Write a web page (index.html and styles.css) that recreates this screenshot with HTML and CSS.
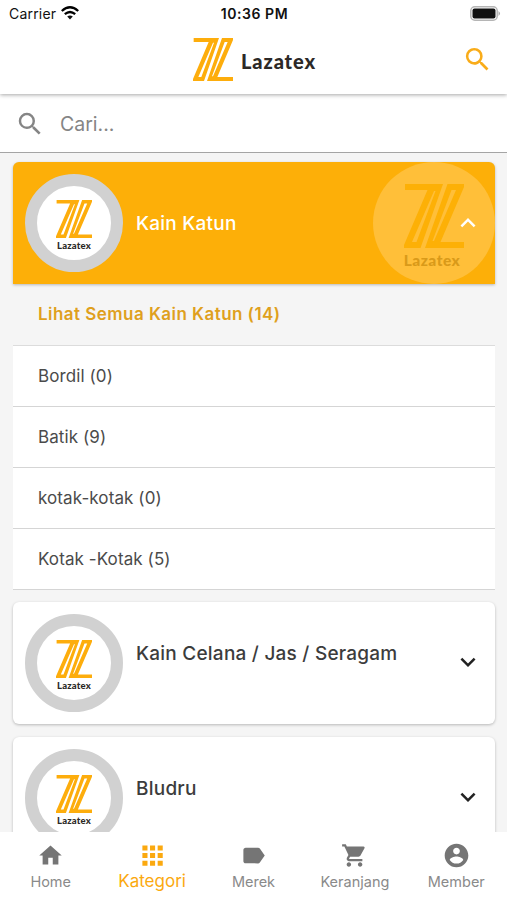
FILE: index.html
```html
<!DOCTYPE html>
<html lang="id">
<head>
<meta charset="utf-8">
<meta name="viewport" content="width=device-width">
<title>Lazatex</title>
<link rel="stylesheet" href="styles.css">
</head>
<body>
<svg class="defs" width="0" height="0">
  <symbol id="mark" viewBox="0 0 120 128" preserveAspectRatio="none">
    <g fill="currentColor" fill-rule="evenodd">
      <path d="M2 0H78L33 128H0V122L47 12H2zM16 116H25L63 14H60z"/>
      <path d="M120 128H42L87 0H120V6L73 116H120zM104 12H95L57 114H60z"/>
    </g>
  </symbol>
  <symbol id="search" viewBox="0 0 24 24"><path d="M15.5 14h-.79l-.28-.27A6.471 6.471 0 0 0 16 9.5 6.5 6.5 0 1 0 9.5 16c1.61 0 3.09-.59 4.23-1.57l.27.28v.79l5 4.99L20.49 19l-4.99-5zm-6 0C7.01 14 5 11.99 5 9.5S7.01 5 9.5 5 14 7.01 14 9.5 11.99 14 9.5 14z"/></symbol>
  <symbol id="down" viewBox="0 0 24 24"><path d="M7.41 8.59 12 13.17l4.59-4.58L18 10l-6 6-6-6z"/></symbol>
</svg>
<div class="app">
  <div class="status">
    <div class="carrier">Carrier
      <svg width="18" height="14" viewBox="0 0 18 14"><g fill="none" stroke="#000" stroke-width="2.3"><path d="M.8 5Q9-2.4 17.2 5"/><path d="M3.8 8.2Q9 3.8 14.2 8.2"/></g><path d="M6.2 10.6Q9 8.6 11.8 10.6L9 13.6z"/></svg>
    </div>
    <div class="time">10:36 PM</div>
    <svg class="battery" width="31" height="15" viewBox="0 0 31 15"><rect x=".8" y=".8" width="26.4" height="13.4" rx="4" fill="#fff" stroke="#b5b5b5" stroke-width="1.5"/><rect x="2.5" y="2.5" width="23" height="10" rx="2"/><path d="M28.5 5q3 2.5 0 5z" fill="#aaa"/></svg>
  </div>
  <header class="header">
    <div class="brand"><svg class="brand-mark"><use href="#mark"/></svg><span class="word">Lazatex</span></div>
    <svg class="header-search"><use href="#search"/></svg>
  </header>
  <div class="searchbar"><svg><use href="#search"/></svg><span>Cari...</span></div>
  <main class="list">
    <section class="card active">
      <div class="watermark"><svg><use href="#mark"/></svg><span class="word">Lazatex</span></div>
      <div class="avatar"><svg><use href="#mark"/></svg><span class="word">Lazatex</span></div>
      <h2>Kain Katun</h2>
      <svg class="chevron"><use href="#down"/></svg>
    </section>
    <div class="all">Lihat Semua Kain Katun (14)</div>
    <ul class="sub">
      <li>Bordil (0)</li>
      <li>Batik (9)</li>
      <li>kotak-kotak (0)</li>
      <li>Kotak -Kotak (5)</li>
    </ul>
    <section class="card">
      <div class="avatar"><svg><use href="#mark"/></svg><span class="word">Lazatex</span></div>
      <h2>Kain Celana / Jas / Seragam</h2>
      <svg class="chevron"><use href="#down"/></svg>
    </section>
    <section class="card">
      <div class="avatar"><svg><use href="#mark"/></svg><span class="word">Lazatex</span></div>
      <h2>Bludru</h2>
      <svg class="chevron"><use href="#down"/></svg>
    </section>
  </main>
  <nav class="tabs">
    <a><svg viewBox="0 0 24 24"><path d="M10 20v-6h4v6h5v-8h3L12 3 2 12h3v8z"/></svg><span>Home</span></a>
    <a class="on"><svg viewBox="0 0 24 24"><path d="M4 8h4V4H4zm6 12h4v-4h-4zm-6 0h4v-4H4zm0-6h4v-4H4zm6 0h4v-4h-4zm6-10v4h4V4zm-6 4h4V4h-4zm6 6h4v-4h-4zm0 6h4v-4h-4z" transform="matrix(1.13 0 0 1.13 -1.5 -1.5)"/></svg><span>Kategori</span></a>
    <a><svg viewBox="0 0 24 24"><path d="M17.63 5.84C17.27 5.33 16.67 5 16 5L5 5.01C3.9 5.01 3 5.9 3 7v10c0 1.1.9 1.99 2 1.99L16 19c.67 0 1.27-.33 1.63-.84L22 12z"/></svg><span>Merek</span></a>
    <a><svg viewBox="0 0 24 24"><path d="M7 18c-1.1 0-1.99.9-1.99 2S5.9 22 7 22s2-.9 2-2-.9-2-2-2zM1 2v2h2l3.6 7.59-1.35 2.45C4.52 15.37 5.48 17 7 17h12v-2H7.42a.25.25 0 0 1-.25-.25l.03-.12.9-1.63h7.45c.75 0 1.41-.41 1.75-1.03l3.58-6.49A1 1 0 0 0 20 4H5.21l-.94-2zm16 16c-1.1 0-1.99.9-1.99 2s.89 2 1.99 2 2-.9 2-2-.9-2-2-2z"/></svg><span>Keranjang</span></a>
    <a><svg viewBox="0 0 24 24"><path d="M12 1.5C6.2 1.5 1.5 6.2 1.5 12S6.2 22.5 12 22.5 22.5 17.8 22.5 12 17.8 1.5 12 1.5zm0 3.5c1.66 0 3 1.34 3 3s-1.34 3-3 3-3-1.34-3-3 1.34-3 3-3zm0 14.2a7.2 7.2 0 0 1-6-3.22c.03-1.99 4-3.08 6-3.08 1.99 0 5.97 1.09 6 3.08a7.2 7.2 0 0 1-6 3.22z"/></svg><span>Member</span></a>
  </nav>
</div>
</body>
</html>
```
FILE: styles.css
```css
* { box-sizing: border-box; }
body { margin: 0; font-family: Inter, "Liberation Sans", sans-serif; color: #3c3c3c; background: #f5f5f5; }
svg { display: block; flex: none; fill: currentColor; }
.defs { position: absolute; }
.app { height: 900px; display: flex; flex-direction: column; overflow: hidden; }
.status { flex: none; height: 28px; background: #fff; color: #111; display: grid; grid-template-columns: 1fr auto 1fr; align-items: center; padding: 0 6px 2px 9px; font-size: 14px; letter-spacing: .2px; position: relative; z-index: 2; }
.carrier { display: flex; align-items: center; gap: 5px; }
.time { font-weight: 600; font-size: 14px; letter-spacing: .55px; margin-right: 1px; }
.battery { justify-self: end; }
.header { flex: none; height: 66px; background: #fff; display: flex; align-items: center; justify-content: center; position: relative; z-index: 1; box-shadow: 0 1px 4px rgba(0,0,0,.35); padding: 0 0 3px 2px; }
.brand { display: flex; align-items: center; gap: 8px; color: #fdad0c; }
.brand-mark { width: 40px; height: 43px; }
.word { font-family: Lato, sans-serif; font-weight: 900; color: #2c2927; line-height: 1; }
.brand .word { font-size: 20px; padding-top: 3px; letter-spacing: .9px; }
.header-search { position: absolute; right: 14px; top: 16px; width: 31px; height: 31px; color: #f9ac19; }
.searchbar { flex: none; height: 59px; border-bottom: 1px solid #a5a5a5; background: #fff; display: flex; align-items: center; padding: 1px 14px 0 15px; gap: 15px; color: #858585; font-size: 19.5px; }
.searchbar svg { width: 30px; height: 30px; }
.list { flex: 1; min-height: 0; overflow: hidden; padding: 9px 12px 0 13px; }
.card { height: 122px; background: #fff; border-radius: 6px; box-shadow: 0 1px 3px rgba(0,0,0,.25); display: flex; align-items: center; padding: 0 12px; position: relative; margin-bottom: 13px; }
.card h2 { flex: 1; margin: 0 0 18px 13px; font-size: 19px; font-weight: 500; line-height: 24px; letter-spacing: .23px; }
.card.active { background: #fdaf08; color: #fff; border-radius: 6px 6px 0 0; margin: 0; }
.card.active h2 { margin-bottom: -2px; }
.avatar { width: 98px; height: 98px; border-radius: 50%; border: 12px solid #d1d1d1; background: #fff; display: flex; flex-direction: column; align-items: center; padding-top: 14px; color: #fdad0c; gap: 3px; }
.avatar svg { width: 36px; height: 38px; }
.avatar .word { font-size: 9.5px; letter-spacing: .2px; }
.chevron { width: 30px; height: 30px; color: #222; position: relative; top: -1px; }
.active .chevron { color: #fff; transform: rotate(180deg); top: 0; }
.watermark { position: absolute; right: 0; top: 0; width: 122px; height: 122px; border-radius: 50%; background: #ffbf39; display: flex; flex-direction: column; align-items: center; padding-top: 22px; gap: 5px; color: #fdb006; }
.watermark svg { width: 60px; height: 64px; }
.watermark .word { font-size: 15.5px; letter-spacing: .5px; margin-right: 4px; color: #d99a19; }
.all { height: 61px; padding-left: 25px; line-height: 60px; font-size: 17px; font-weight: 600; letter-spacing: .46px; color: #dfa01d; }
.sub { list-style: none; margin: 0 0 12px; padding: 0; border-top: 1px solid #dcdcdc; background: #fff; }
.sub li { height: 61px; line-height: 60px; padding-left: 25px; border-bottom: 1px solid #d5d5d5; font-size: 17px; letter-spacing: .1px; color: #4b4b4b; }
.tabs { flex: none; height: 68px; background: #fff; display: grid; grid-template-columns: repeat(5, 1fr); color: #757575; position: relative; }
.tabs a { display: flex; flex-direction: column; align-items: center; padding-top: 10px; }
.tabs svg { width: 27px; height: 27px; }
.tabs span { font-size: 14.5px; line-height: 25px; color: #8a8a8a; }
.tabs .on, .tabs .on span { color: #fba90f; }
.tabs .on span { font-size: 17px; line-height: 24px; }
```
